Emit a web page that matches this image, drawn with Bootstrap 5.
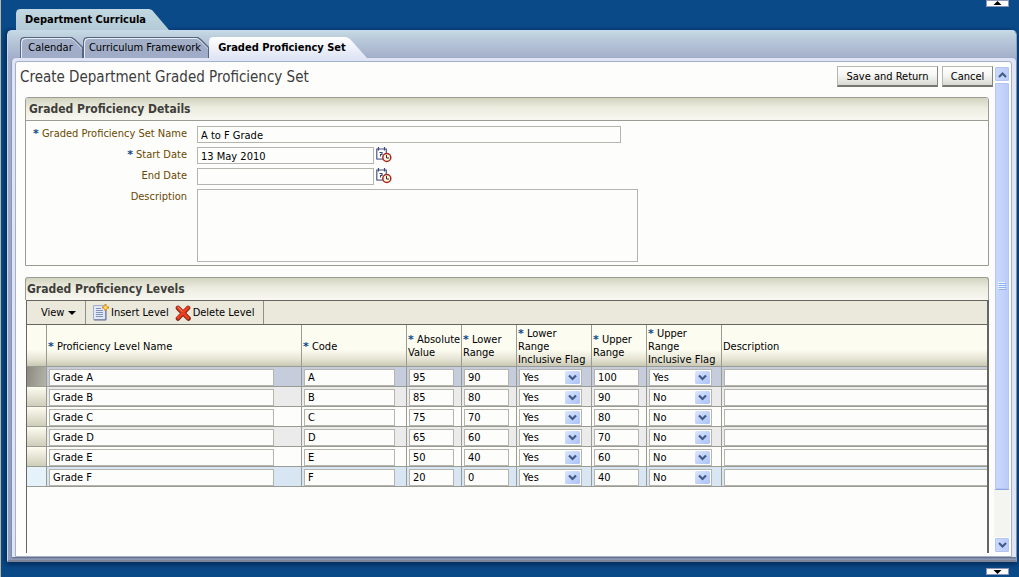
<!DOCTYPE html>
<html lang="en">
<head>
<meta charset="utf-8">
<meta name="viewport" content="width=device-width, initial-scale=1">
<title>Department Graded Proficiency Set</title>
<link href="https://cdn.jsdelivr.net/npm/bootstrap@5.3.0/dist/css/bootstrap.min.css" rel="stylesheet">
<style>
  :root { --ui: Tahoma, "DejaVu Sans Condensed", "DejaVu Sans", sans-serif; --line: #9a9b93; --dark: #65665f; }
  body { font-family: var(--ui); font-size: 11px; line-height: 13px; color: #000; background: #0b4a88; border-left: 1px solid #b9b5a4; }
  .shell { height: 100vh; min-height: 480px; padding: 9px 2px 15px 6px; }
  .collapser { position: absolute; right: 10px; width: 23px; height: 7px; padding: 0; border: 1px solid #8e94b8; background: #fff; line-height: 0; }
  .collapser svg { display: block; margin: auto; }
  .collapser.at-top { top: 0; }
  .collapser.at-bottom { bottom: 2px; }

  .tab { border: 0; background: none; height: 21px; padding: 0; color: #000; position: relative; z-index: 0; white-space: nowrap; }
  .tab-main { margin-left: 9px; width: 153px; padding-right: 14px; font-weight: bold; background: linear-gradient(#c2d8e2, #b3cbd6);
    clip-path: polygon(0 4px, 1px 1px, 4px 0, calc(100% - 20px) 0, calc(100% - 17px) 1px, 100% 100%, 0 100%); }
  .tab-set { height: 27px; padding: 6px 0 0 12px; }
  .tab-off, .tab-off::before, .tab-off::after { clip-path: polygon(0 4px, 1px 1px, 4px 0, calc(100% - 11px) 0, calc(100% - 8px) 2px, 100% 10px, 100% 100%, 0 100%); }
  .tab-off { background: #56657f; padding-right: 2px; }
  .tab-off::before, .tab-off::after { content: ""; position: absolute; z-index: -1; inset: 1px 1px 0 1px; background: #e6ecf6; }
  .tab-off::after { inset: 2px 1px 0 2px; background: linear-gradient(#a3afc6, #a0acc8); }
  .tab-on { width: 158px; height: 21px; padding-right: 12px; font-weight: bold; background: linear-gradient(#fff, #dfe5f5);
    clip-path: polygon(0 4px, 1px 1px, 4px 0, calc(100% - 21px) 0, calc(100% - 17px) 2px, 100% 100%, 0 100%); }
  .w-cal { width: 63px; } .w-cur { width: 126px; }

  .frame { background: linear-gradient(#c4dae3 0, #bccddc 6px, #a3aecb 27px, #8f9cbb 100%); border: 1px solid #c9d8ea; border-right-color: #8ea0c0; border-bottom: 2px solid #7e8498;
    border-radius: 5px 5px 0 0; box-shadow: 0 3px 5px #05305f, -2px 0 4px #05305f; min-height: 0; }
  .inner { margin: 0 0 3px 4px; padding: 3px 4px 0 3px; background: #dfe5f5; border-radius: 4px 4px 0 0; min-height: 0; box-shadow: 0 1px 2px #60657a; }
  .sheet { background: #fdfefc; border: 1px solid #a4b1cc; border-radius: 3px 3px 0 0; padding: 4px 1px 3px 4px; min-height: 0; min-width: 0; }
  .view-area { min-width: 0; }
  .page-title { font-size: 15px; line-height: 23px; color: #3c3c3c; font-weight: normal; }
  .cmd { height: 21px; padding: 0; border: 1px solid #b7b7ae; border-right-color: #84847c; border-bottom: 2px solid #77776f; background: linear-gradient(#fff, #f6f6f3 45%, #d9d9d3); color: #000; }
  .w-save { width: 101px; } .w-cancel { width: 51px; }

  .box { margin: 0 4px 0 5px; }
  .box-head { margin: 0; padding-top: 1px; font-size: 12px; line-height: 21px; font-weight: bold; color: #3e3e3a; background: linear-gradient(#d2d3bf, #ecece0 45%, #f8f8f2); border: 1px solid var(--line); border-radius: 3px 3px 0 0; }
  .details { margin-top: 8px; border: 1px solid var(--line); border-radius: 3px 3px 0 0; }
  .details .box-head { border-width: 0 0 1px; padding-left: 3px; }
  .form-grid { display: grid; grid-template-columns: 161px 1fr; column-gap: 10px; row-gap: 4px; padding: 5px 0 3px; }
  .form-grid label { text-align: right; color: #6b4800; line-height: 15px; }
  .req { color: #0d4a86; font-family: "DejaVu Sans", sans-serif; font-weight: bold; font-size: 11px; }
  .fld { height: 17px; border: 1px solid #b5b5ad; border-radius: 0; background: #fdfefc; padding: 1px 3px 0; font-size: 11px; line-height: 13px; color: #000; display: block; outline-color: #6b8fc9; }
  .w-name { width: 424px; } .w-date { width: 177px; }
  textarea.fld { width: 441px; height: 73px; resize: none; }
  .date-line { gap: 2px; }
  .icon-btn { border: 0; background: none; padding: 0; width: 16px; height: 16px; line-height: 0; }

  .levels { margin-top: 11px; min-height: 0; }
  .levels .box-head { border-bottom: 0; padding-left: 1px; }
  .grid-wrap { border: solid var(--dark); border-width: 1px 2px 0 1px; min-height: 0; overflow: hidden; margin-left: 1px; }
  .tools { height: 24px; background: #ebe8dc; border-bottom: 1px solid var(--dark); }
  .tools button { border: 0; background: none; padding: 0; color: #000; }
  .tools-part { border-right: 1px solid #8f9088; }
  .part-view { width: 59px; padding-left: 14px; }
  .part-edit { width: 178px; padding-left: 7px; gap: 6px; }
  .part-edit button { gap: 2px; white-space: nowrap; }
  table.levels-table { width: 100%; table-layout: fixed; border-collapse: separate; border-spacing: 0; }
  .levels-table th { height: 42px; padding: 1px 0 0 1px; font-weight: normal; vertical-align: middle; background: linear-gradient(#fcfcf0 60%, #e3e2d2 85%, #c9c8b4); border: solid var(--line); border-width: 0 1px 1px 0; white-space: nowrap; }
  .levels-table td { height: 20px; padding: 1px 0 0 2px; border: solid var(--line); border-width: 0 1px 1px 0; background: #fdfefc; }
  .levels-table th:last-child, .levels-table td:last-child { border-right: 0; }
  .levels-table td.grip { background: linear-gradient(#fcfcf0, #cfceba); }
  .levels-table tr.alt td { background-color: #ebebeb; }
  .levels-table tr.current td { background-color: #c5cddd; }
  .levels-table tr.current td.grip { background: linear-gradient(100deg, #8b8a80, #b5b4a8); }
  .levels-table tr.newest td { background-color: #d7e6f2; }
  .levels-table tr.newest td.grip { background: #e6f2fa; }
  .f-name { width: 225px; } .f-code { width: 91px; } .f-num { width: 45px; }
  .f-rest { width: 100%; border-right: 0; }
  select.fld { width: 63px; appearance: none; background: #fdfefc url("data:image/svg+xml,%3Csvg xmlns='http://www.w3.org/2000/svg' width='15' height='13'%3E%3Cdefs%3E%3ClinearGradient id='g' x2='1' y2='1'%3E%3Cstop stop-color='%23dbe6fd'/%3E%3Cstop offset='1' stop-color='%23abc2f8'/%3E%3C/linearGradient%3E%3C/defs%3E%3Crect width='15' height='13' rx='1.5' fill='url(%23g)'/%3E%3Cpath d='M4 4.5l3.5 3.5L11 4.5' fill='none' stroke='%23405a87' stroke-width='2.2'/%3E%3C/svg%3E") no-repeat right 1px top 1px; }

  .scroller { width: 16px; margin-left: 1px; background: #f4f4f0; }
  .scroller button, .thumb { border: 1px solid #fff; border-radius: 2px; background: linear-gradient(90deg, #cbdafd, #bacbf8); box-shadow: inset 0 0 0 1px #b3c5f0; padding: 0; width: 16px; }
  .scroller button { height: 16px; line-height: 0; }
  .thumb { flex: 0 1 408px; border-bottom-color: #8ba5dd; }
</style>
</head>
<body>
<button class="collapser at-top" type="button" aria-label="Collapse header"><svg width="9" height="5"><path d="M4.500 0L8.500 4H.5z"/></svg></button>
<button class="collapser at-bottom" type="button" aria-label="Collapse footer"><svg width="9" height="5"><path d="M4.500 5L8.500 1H.5z"/></svg></button>

<div class="shell d-flex flex-column">
  <nav class="d-flex" aria-label="Main"><button class="tab tab-main" type="button">Department Curricula</button></nav>
  <div class="frame d-flex flex-column flex-fill">
    <nav class="tab-set d-flex" aria-label="Sections">
      <button class="tab tab-off w-cal" type="button">Calendar</button>
      <button class="tab tab-off w-cur" type="button">Curriculum Framework</button>
      <button class="tab tab-on" type="button">Graded Proficiency Set</button>
    </nav>
    <div class="inner d-flex flex-fill">
      <main class="sheet d-flex flex-fill">
        <div class="view-area d-flex flex-column flex-fill">
          <div class="d-flex align-items-start">
            <h1 class="page-title m-0 me-auto">Create Department Graded Proficiency Set</h1>
            <button class="cmd w-save" type="button">Save and Return</button>
            <button class="cmd w-cancel ms-1" type="button">Cancel</button>
          </div>

          <section class="box details">
            <h2 class="box-head">Graded Proficiency Details</h2>
            <form class="form-grid">
              <label for="setName"><span class="req">*</span> Graded Proficiency Set Name</label>
              <input class="fld w-name" id="setName" type="text" value="A to F Grade">
              <label for="startDate"><span class="req">*</span> Start Date</label>
              <div class="date-line d-flex"><input class="fld w-date" id="startDate" type="text" value="13 May 2010">
                <button class="icon-btn" type="button" aria-label="Pick start date"><svg width="16" height="16"><use href="#calendar"/></svg></button></div>
              <label for="endDate">End Date</label>
              <div class="date-line d-flex"><input class="fld w-date" id="endDate" type="text">
                <button class="icon-btn" type="button" aria-label="Pick end date"><svg width="16" height="16"><use href="#calendar"/></svg></button></div>
              <label for="setDesc">Description</label>
              <textarea class="fld" id="setDesc"></textarea>
            </form>
          </section>

          <section class="box levels d-flex flex-column flex-fill">
            <h2 class="box-head">Graded Proficiency Levels</h2>
            <div class="grid-wrap flex-fill">
              <div class="tools d-flex">
                <div class="tools-part part-view d-flex"><button type="button">View <svg width="8" height="5"><path d="M0 0h8L4 4z"/></svg></button></div>
                <div class="tools-part part-edit d-flex">
                  <button type="button" class="d-flex align-items-center">
                    <svg width="16" height="17" viewBox="0 0 16 17"><path d="M.5 1.500h12v14H.5z" fill="#dfe6f5" stroke="#a3aecb"/><path d="M1 16h12V5" fill="none" stroke="#5d6b96"/><path d="M3 4.500h5M3 6.500h7M3 8.500h7M3 10.500h7M3 12.500h7" stroke="#8493bb"/><path d="M12.500 0v7M9 3.500h7" stroke="#d08a20" stroke-width="2"/><circle cx="12.500" cy="3.500" r="2" fill="#ffe060" stroke="#e0a030"/></svg>
                    Insert Level</button>
                  <button type="button" class="d-flex align-items-center">
                    <svg width="16" height="16" viewBox="0 0 16 16"><path d="M3 3l10.500 10.500M13 3L3 13.500" stroke="#7a2b1c" stroke-width="4.600" stroke-linecap="round"/><path d="M3 2.500l10 10.500M13 2.500L3 13" stroke="#f03c1c" stroke-width="3" stroke-linecap="round"/><path d="M3 2l4.500 4.500" stroke="#ff9270"/></svg>
                    Delete Level</button>
                </div>
              </div>
              <table class="levels-table">
                <colgroup><col style="width:20px"><col style="width:255px"><col style="width:105px"><col style="width:55px"><col style="width:55px"><col style="width:75px"><col style="width:55px"><col style="width:75px"><col></colgroup>
                <thead><tr>
                  <th></th>
                  <th><span class="req">*</span> Proficiency Level Name</th>
                  <th><span class="req">*</span> Code</th>
                  <th><span class="req">*</span> Absolute<br>Value</th>
                  <th><span class="req">*</span> Lower<br>Range</th>
                  <th><span class="req">*</span> Lower<br>Range<br>Inclusive Flag</th>
                  <th><span class="req">*</span> Upper<br>Range</th>
                  <th><span class="req">*</span> Upper<br>Range<br>Inclusive Flag</th>
                  <th>Description</th>
                </tr></thead>
                <tbody id="levelRows"></tbody>
              </table>
            </div>
          </section>
        </div>

        <div class="scroller d-flex flex-column">
          <button type="button" aria-label="Scroll up"><svg width="9" height="7"><path d="M1 6l3.500-3.500L8 6" fill="none" stroke="#405a87" stroke-width="2"/></svg></button>
          <div class="thumb d-flex align-items-center justify-content-center"><svg width="8" height="8"><path d="M0 .5h7M0 2.500h7M0 4.500h7M0 6.500h7" stroke="#eef4fe"/><path d="M1 1.500h7M1 3.500h7M1 5.500h7M1 7.500h7" stroke="#8cb0f8"/></svg></div>
          <button class="mt-auto" type="button" aria-label="Scroll down"><svg width="9" height="7"><path d="M1 1l3.500 3.500L8 1" fill="none" stroke="#405a87" stroke-width="2"/></svg></button>
        </div>
      </main>
    </div>
  </div>
</div>

<svg class="d-none" aria-hidden="true">
  <symbol id="calendar" viewBox="0 0 16 16">
    <path d="M.8 2h9.500v10H.8z" fill="#fff" stroke="#4a5488" stroke-width="1.200"/><path d="M2.500 0v3.500M8.500 0v3.500" stroke="#3c4677" stroke-width="1.200"/>
    <path d="M3.500 5.500h2.500v2H4.500v2" fill="none" stroke="#33406f" stroke-width="1.100"/><path d="M.8 12.500h6" stroke="#8b93b5"/>
    <circle cx="10.800" cy="10.500" r="4" fill="#fff3dc" stroke="#a52a23" stroke-width="1.500"/><path d="M10.500 8v3H13" fill="none" stroke="#333"/>
  </symbol>
</svg>

<script src="https://cdn.jsdelivr.net/npm/bootstrap@5.3.0/dist/js/bootstrap.bundle.min.js"></script>
<script>
  const levels = [
    ["A", 95, 90, "Yes", 100, "Yes"], ["B", 85, 80, "Yes", 90, "No"], ["C", 75, 70, "Yes", 80, "No"],
    ["D", 65, 60, "Yes", 70, "No"], ["E", 50, 40, "Yes", 60, "No"], ["F", 20, 0, "Yes", 40, "No"]
  ];
  const rowClass = ["current", "alt", "", "alt", "", "newest"];
  const box = (cls, label, value) => `<td><input type="text" class="fld ${cls}" aria-label="${label}" value="${value}"></td>`;
  const flag = (label, value) => `<td><select class="fld" aria-label="${label}">` +
    ["Yes", "No"].map(o => `<option${o === value ? " selected" : ""}>${o}</option>`).join("") + `</select></td>`;
  document.getElementById("levelRows").innerHTML = levels.map(([g, abs, low, lowFlag, up, upFlag], i) =>
    `<tr class="${rowClass[i]}"><td class="grip"></td>` +
    box("f-name", "Proficiency level name", "Grade " + g) + box("f-code", "Code", g) +
    box("f-num", "Absolute value", abs) + box("f-num", "Lower range", low) + flag("Lower range inclusive", lowFlag) +
    box("f-num", "Upper range", up) + flag("Upper range inclusive", upFlag) + box("f-rest", "Description", "") + "</tr>").join("");
</script>
</body>
</html>
